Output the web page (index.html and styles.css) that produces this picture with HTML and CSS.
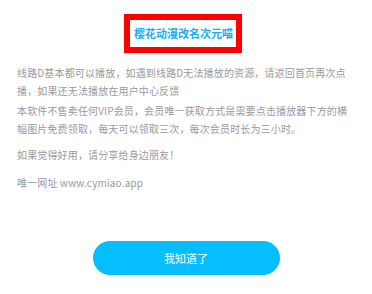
FILE: index.html
```html
<!DOCTYPE html>
<html lang="zh-CN">
<head>
<meta charset="utf-8">
<link rel="stylesheet" href="styles.css">
</head>
<body>
<div class="dialog">
  <div class="title-row">
    <div class="title">樱花动漫改名次元喵</div>
  </div>
  <div class="content">
    <p class="para p1">线路D基本都可以播放，如遇到线路D无法播放的资源，请返回首页再次点播，如果还无法播放在用户中心反馈</p>
    <p class="para p2">本软件不售卖任何VIP会员，会员唯一获取方式是需要点击播放器下方的横幅图片免费领取，每天可以领取三次，每次会员时长为三小时。</p>
    <p class="para p3">如果觉得好用，请分享给身边朋友！</p>
    <p class="para p4">唯一网址 www.cymiao.app</p>
  </div>
  <div class="actions">
    <button class="btn">我知道了</button>
  </div>
</div>
</body>
</html>
```
FILE: styles.css
```css
html, body {
  margin: 0;
  padding: 0;
  background: #ffffff;
}
body {
  font-family: "Noto Sans CJK SC", "Noto Sans", sans-serif;
  width: 372px;
  height: 294px;
  overflow: hidden;
}
.dialog {
  padding: 14px 24px 0 17px;
}
.title-row {
  display: flex;
  justify-content: center;
  margin-right: -4px;
}
.title {
  border: 6px solid #ff0000;
  padding: 0 3px 0 4px;
  height: 27px;
  line-height: 27px;
  font-size: 11px;
  font-weight: bold;
  color: #1aaef0;
  margin-left: -3px;
}
.content {
  margin-top: 11px;
}
.para {
  margin: 0;
  font-size: 10px;
  letter-spacing: 0.15px;
  line-height: 18px;
  color: #9a9a9a;
  text-spacing-trim: space-all;
}
.p1 {
  margin-bottom: 2px;
}
.p2 {
  margin-bottom: 8px;
}
.p3 {
  margin-bottom: 10px;
}
.actions {
  display: flex;
  justify-content: center;
  margin-top: 49px;
  margin-left: -17px;
  margin-right: -24px;
}
.btn {
  width: 187px;
  height: 34px;
  border: none;
  border-radius: 17px;
  background: #06bdff;
  color: #ffffff;
  font-family: "Noto Sans CJK SC", "Noto Sans", sans-serif;
  font-size: 11px;
  padding: 0;
}
```
